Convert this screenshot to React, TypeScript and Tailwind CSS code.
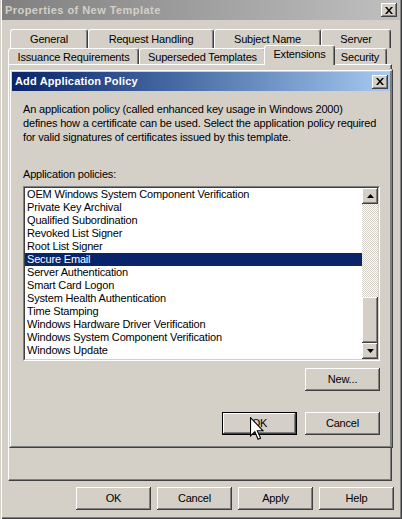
const raised = 'shadow-[inset_-1px_-1px_#404040,inset_1px_1px_#ffffff,inset_-2px_-2px_#808080]';

const policies = [
  'OEM Windows System Component Verification',
  'Private Key Archival',
  'Qualified Subordination',
  'Revoked List Signer',
  'Root List Signer',
  'Secure Email',
  'Server Authentication',
  'Smart Card Logon',
  'System Health Authentication',
  'Time Stamping',
  'Windows Hardware Driver Verification',
  'Windows System Component Verification',
  'Windows Update',
];

function CloseGlyph() {
  return (
    <svg width="8" height="7" viewBox="0 0 8 7" aria-hidden="true">
      <path d="M0 0h2l2 2.4L6 0h2L5 3.5 8 7H6L4 4.6 2 7H0l3-3.5z" fill="#000" />
    </svg>
  );
}

function CaptionButton() {
  return (
    <div className={`w-[16px] h-[14px] flex items-center justify-center bg-[#d4d0c8] ${raised}`}>
      <CloseGlyph />
    </div>
  );
}

function Button({ label, isDefault, children }: { label: string; isDefault?: boolean; children?: React.ReactNode }) {
  if (isDefault) {
    return (
      <div className="relative w-[75px] h-[23px] border border-black">
        <div className={`h-full flex items-center justify-center bg-[#d4d0c8] ${raised}`}>{label}</div>
        {children}
      </div>
    );
  }
  return (
    <div className={`w-[75px] h-[23px] flex items-center justify-center bg-[#d4d0c8] ${raised}`}>{label}</div>
  );
}

function Tab({ label, w, selected }: { label: string; w: string; selected?: boolean }) {
  const base =
    'flex items-center justify-center bg-[#d4d0c8] border-t border-l border-r border-t-white border-l-white border-r-[#404040] rounded-t-[3px] shadow-[inset_-1px_0_#808080]';
  if (selected) {
    return (
      <div className={`${w} relative z-10 -mx-[2px] -mb-px h-[20px] pb-[3px] ${base}`}>{label}</div>
    );
  }
  return <div className={`${w} h-full pt-px ${base}`}>{label}</div>;
}

function ScrollArrow({ up }: { up?: boolean }) {
  return (
    <div className={`w-[16px] h-[16px] flex items-center justify-center bg-[#d4d0c8] ${raised}`}>
      <svg width="7" height="4" viewBox="0 0 7 4" aria-hidden="true">
        <path d={up ? 'M3.5 0L7 4H0z' : 'M0 0h7L3.5 4z'} fill="#000" />
      </svg>
    </div>
  );
}

function Cursor() {
  return (
    <svg
      className="absolute left-[27px] top-[4px] z-20"
      width="14"
      height="24"
      viewBox="0 0 13 22"
      aria-hidden="true"
    >
      <path d="M0.5 0.5V17.5L4.5 13.5L7.5 20.5L9.8 19.5L6.8 12.7H12.2Z" fill="#fff" stroke="#000" strokeWidth="1" />
    </svg>
  );
}

export default function App() {
  return (
    <div className="w-[402px] h-[519px] overflow-hidden bg-[#d4d0c8] font-['Liberation_Sans',Arial,sans-serif] text-[11px] text-black leading-[13px] tracking-[-0.17px] px-[2px] pb-[2px] flex flex-col shadow-[inset_1px_0_#d4d0c8,inset_2px_0_#ffffff,inset_-1px_-1px_#404040,inset_-2px_-2px_#808080]">
      {/* outer caption */}
      <div className="h-[20px] flex items-center justify-between pl-[3px] pr-[3px] bg-gradient-to-r from-[#808080] to-[#c0c0c0]">
        <span className="font-bold tracking-[0.45px] text-[#d4d0c8]">Properties of New Template</span>
        <CaptionButton />
      </div>

      {/* tabs */}
      <div className="mt-[9px] flex flex-col">
        <div className="ml-[8px] h-[19px] flex">
          <Tab label="General" w="w-[78px]" />
          <Tab label="Request Handling" w="w-[126px]" />
          <Tab label="Subject Name" w="w-[107px]" />
          <Tab label="Server" w="w-[70px]" />
        </div>
        <div className="ml-[6px] h-[16px] flex items-end">
          <Tab label="Issuance Requirements" w="w-[131px]" />
          <Tab label="Superseded Templates" w="w-[127px]" />
          <Tab label="Extensions" w="w-[71px]" selected />
          <Tab label="Security" w="w-[54px]" />
        </div>
      </div>

      {/* tab panel */}
      <div className="ml-[6px] w-[384px] h-[417px] border border-t-white border-l-white border-r-[#404040] border-b-[#404040] shadow-[inset_-1px_-1px_#808080]">
        {/* Add Application Policy dialog */}
        <div className="mt-[4px] w-[384px] border border-t-[#d4d0c8] border-l-[#d4d0c8] border-r-[#404040] border-b-[#404040]">
          <div className="border border-t-white border-l-white border-r-[#808080] border-b-[#808080] p-px">
            <div className="h-[19px] flex items-center justify-between pl-[3px] pr-[2px] bg-gradient-to-r from-[#0a246a] to-[#a6caf0]">
              <span className="font-bold tracking-[0.15px] text-white">Add Application Policy</span>
              <CaptionButton />
            </div>

            <div className="pl-[11px] pr-[10px] pt-[11px] pb-[10px] flex flex-col">
              <p className="leading-[14px] whitespace-nowrap">
                An application policy (called enhanced key usage in Windows 2000)
                <br />
                defines how a certificate can be used. Select the application policy required
                <br />
                for valid signatures of certificates issued by this template.
              </p>

              <div className="mt-[24px] h-[13px]">Application policies:</div>

              {/* list box */}
              <div className="mt-[5px] w-[357px] h-[175px] border border-t-[#808080] border-l-[#808080] border-r-white border-b-white">
                <div className="h-full flex border border-t-[#404040] border-l-[#404040] border-r-[#d4d0c8] border-b-[#d4d0c8] bg-white">
                  <ul className="flex-1 flex flex-col">
                    {policies.map((p) => (
                      <li
                        key={p}
                        className={`h-[13px] pl-[2px] whitespace-nowrap ${
                          p === 'Secure Email' ? 'bg-[#0a246a] text-white' : ''
                        }`}
                      >
                        {p}
                      </li>
                    ))}
                  </ul>
                  <div className="w-[16px] flex flex-col">
                    <ScrollArrow up />
                    <div className="flex-1 bg-[image:repeating-conic-gradient(#ffffff_0%_25%,#d4d0c8_0%_50%)] bg-[length:2px_2px]" />
                    <div className={`h-[46px] bg-[#d4d0c8] ${raised}`} />
                    <ScrollArrow />
                  </div>
                </div>
              </div>

              <div className="mt-[7px] flex justify-end">
                <Button label="New..." />
              </div>

              <div className="mt-[21px] flex justify-end gap-[8px]">
                <Button label="OK" isDefault>
                  <Cursor />
                </Button>
                <Button label="Cancel" />
              </div>
            </div>
          </div>
        </div>
      </div>

      {/* bottom buttons */}
      <div className="mt-[6px] pr-[6px] flex justify-end gap-[6px]">
        <Button label="OK" />
        <Button label="Cancel" />
        <Button label="Apply" />
        <Button label="Help" />
      </div>
    </div>
  );
}
